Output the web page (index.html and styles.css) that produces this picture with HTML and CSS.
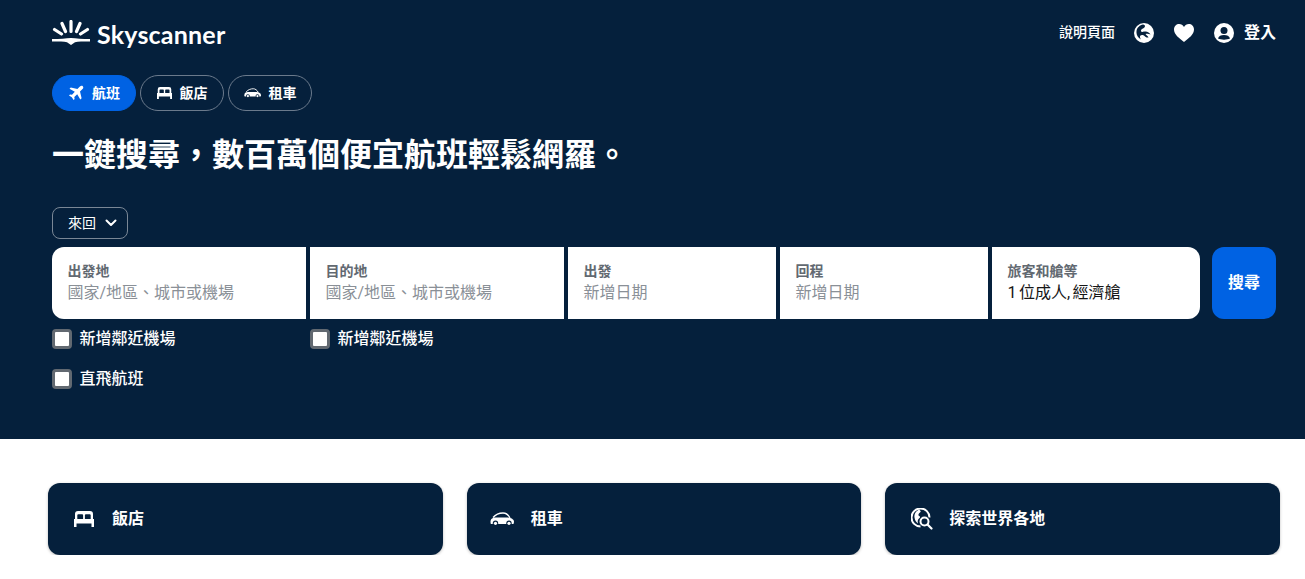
FILE: index.html
```html
<!DOCTYPE html>
<html lang="zh-Hant">
<head>
  <meta charset="UTF-8">
  <title>Skyscanner</title>
  <link rel="stylesheet" href="styles.css">
</head>
<body>

  <div class="hero">
    <div class="topbar">
      <div class="logo">
        <svg class="logo-sun" viewBox="0 0 38 26" width="38" height="26">
          <path d="M2.500 9.500l7 4.500M10 3.500l3.500 8M19 1.500v10M28 3.500l-3.500 8M35.500 9.500l-7 4.500" stroke="#fff" stroke-width="3.200" stroke-linecap="round" fill="none"/>
          <path d="M0 19C8 19 14 18.500 19 18 24 18.500 30 19 38 19V21.500C31 21.500 26 21.500 23 22.200L19 25 15 22.200C12 21.500 7 21.500 0 21.500z" fill="#fff"/>
        </svg>
        <span class="logo-text">Skyscanner</span>
      </div>
      <div class="top-links">
        <span class="help">說明頁面</span>
        <svg class="top-icon" viewBox="0 0 20 20" width="20" height="20">
          <circle cx="10" cy="10" r="10" fill="#fff"/>
          <path d="M9 1.500c-3 .5-6 3-6.500 6.500-.3 2.500.5 5 2.500 7l2 1.500c-1-1.500-1.500-3-.5-4 1-1 3-.5 4 .5.800.8 2 2 4 1.500-.5-1.500-2-2-3-3.500 1-.5 3.500-.5 5 .5-.5-1.500-3-3-5-3-2 0-3 1-4.500 0C6.500 7.500 7.500 6 9 5.500c1-.4 2-1.500 2-2.500 0-.5-.5-1.200-2-1.500z" fill="#05203c"/>
        </svg>
        <svg class="top-icon" viewBox="0 0 20 20" width="20" height="20">
          <path d="M10 19C5 15 0 11.500 0 6.500 0 3 2.500 1 5.200 1 7.200 1 9 2 10 4c1-2 2.800-3 4.800-3C17.500 1 20 3 20 6.500c0 5-5 8.500-10 12.500z" fill="#fff"/>
        </svg>
        <div class="login">
          <svg viewBox="0 0 20 20" width="20" height="20">
            <circle cx="10" cy="10" r="10" fill="#fff"/>
            <circle cx="10" cy="7.500" r="3.500" fill="#05203c"/>
            <path d="M4 15.500c.5-2.500 3-3.500 6-3.500s5.500 1 6 3.500c-3 1.500-9 1.500-12 0z" fill="#05203c"/>
          </svg>
          <span>登入</span>
        </div>
      </div>
    </div>

    <div class="tabs">
      <div class="tab active">
        <svg viewBox="0 0 16 16" width="16" height="16">
          <path d="M14.800 1.200c-.8-.8-2-.6-2.900.3L9.400 4 2.800 2.400 1.500 3.700l5.300 3.100-2.800 2.900-2-.3-1 1 2.800 1.800 1.800 2.800 1-1-.3-2 2.900-2.800 3.100 5.300 1.300-1.300L12 6.600l2.500-2.500c.9-.9 1.100-2.100.3-2.900z" fill="#fff"/>
        </svg>
        <span>航班</span>
      </div>
      <div class="tab">
        <svg viewBox="0 0 20 16" width="15" height="12">
          <path fill-rule="evenodd" d="M4 0h12a3 3 0 0 1 3 3v5h1v8h-2.500v-3.500h-15V16H0V8h1V3a3 3 0 0 1 3-3zM3.300 8h5.800V4.300a1 1 0 0 0-1-1H4.300a1 1 0 0 0-1 1zM10.900 8h5.800V4.300a1 1 0 0 0-1-1h-3.800a1 1 0 0 0-1 1z" fill="#fff"/>
        </svg>
        <span>飯店</span>
      </div>
      <div class="tab">
        <svg viewBox="0 0 24 14" width="17" height="10">
          <path d="M.5 10C.5 7 2 5.500 6 5.500H18C21 6 24 7 24 10L23.500 12H.8z" fill="#fff"/>
          <path d="M3 5.500C6 2 10 1 13 1 16 1 18.500 3 20 6" stroke="#fff" stroke-width="1.300" fill="none"/>
          <circle cx="5.500" cy="11.300" r="2.700" fill="#05203c"/><circle cx="5.500" cy="11.300" r="1.600" fill="#fff"/>
          <circle cx="19" cy="11.300" r="2.700" fill="#05203c"/><circle cx="19" cy="11.300" r="1.600" fill="#fff"/>
        </svg>
        <span>租車</span>
      </div>
    </div>

    <h1 class="headline">一鍵搜尋，數百萬個便宜航班輕鬆網羅。</h1>

    <div class="trip-type">
      <span>來回</span>
      <svg viewBox="0 0 12 8" width="12" height="8">
        <path d="M1.500 1.500L6 6l4.500-4.500" stroke="#fff" stroke-width="2" stroke-linecap="round" stroke-linejoin="round" fill="none"/>
      </svg>
    </div>

    <div class="search-row">
      <div class="field field-wide first">
        <div class="field-label">出發地</div>
        <div class="field-value">國家/地區、城市或機場</div>
      </div>
      <div class="field field-wide">
        <div class="field-label">目的地</div>
        <div class="field-value">國家/地區、城市或機場</div>
      </div>
      <div class="field">
        <div class="field-label">出發</div>
        <div class="field-value">新增日期</div>
      </div>
      <div class="field">
        <div class="field-label">回程</div>
        <div class="field-value">新增日期</div>
      </div>
      <div class="field last">
        <div class="field-label">旅客和艙等</div>
        <div class="field-value filled">1 位成人, 經濟艙</div>
      </div>
      <div class="search-btn"><span>搜尋</span></div>
    </div>

    <div class="nearby-row">
      <label class="check nearby-col"><span class="box"></span><span>新增鄰近機場</span></label>
      <label class="check"><span class="box"></span><span>新增鄰近機場</span></label>
    </div>
    <label class="check direct"><span class="box"></span><span>直飛航班</span></label>
  </div>

  <div class="cards">
    <div class="card">
      <svg class="card-icon" viewBox="0 0 20 16" width="20" height="16">
        <path fill-rule="evenodd" d="M4 0h12a3 3 0 0 1 3 3v5h1v8h-2.500v-3.500h-15V16H0V8h1V3a3 3 0 0 1 3-3zM3.300 8h5.800V4.300a1 1 0 0 0-1-1H4.300a1 1 0 0 0-1 1zM10.900 8h5.800V4.300a1 1 0 0 0-1-1h-3.800a1 1 0 0 0-1 1z" fill="#fff"/>
      </svg>
      <span>飯店</span>
    </div>
    <div class="card">
      <svg class="card-icon car" viewBox="0 0 24 14" width="24" height="14">
        <path d="M.5 10C.5 7 2 5.500 6 5.500H18C21 6 24 7 24 10L23.500 12H.8z" fill="#fff"/>
        <path d="M3 5.500C6 2 10 1 13 1 16 1 18.500 3 20 6" stroke="#fff" stroke-width="1.300" fill="none"/>
        <circle cx="5.500" cy="11.300" r="2.700" fill="#05203c"/><circle cx="5.500" cy="11.300" r="1.600" fill="#fff"/>
        <circle cx="19" cy="11.300" r="2.700" fill="#05203c"/><circle cx="19" cy="11.300" r="1.600" fill="#fff"/>
      </svg>
      <span>租車</span>
    </div>
    <div class="card">
      <svg class="card-icon globe" viewBox="0 0 22 22" width="22" height="22">
        <path d="M9.500 18.500a9 9 0 1 1 9-9" stroke="#fff" stroke-width="2" fill="none"/>
        <path d="M8 1.500C5 3 3 6 3.500 9.500c.3 2.500 1.500 4.500 3.500 6-.5-2-.5-4 1-5 1.500-1 1.500-2-.5-3-.5-1.500 1-2.500 2-3.500 .5-.5 0-1.500-1.500-2.500z" fill="#fff"/>
        <circle cx="13.500" cy="13.500" r="4" stroke="#fff" stroke-width="2" fill="none"/>
        <path d="M16.500 16.500L20.500 20.500" stroke="#fff" stroke-width="2.200" stroke-linecap="round"/>
      </svg>
      <span>探索世界各地</span>
    </div>
  </div>

</body>
</html>
```

FILE: styles.css
```css
* { box-sizing: border-box; }
html, body {
  margin: 0; padding: 0;
  font-family: Roboto, 'Noto Sans CJK TC', sans-serif;
  background-color: #fff; color: #fff;
}
svg { display: block; flex: none; }

.hero { height: 439px; padding: 16px 29px 0 52px; background-color: #05203c; }

.topbar { display: flex; justify-content: space-between; align-items: center; height: 36px; }
.logo { display: flex; align-items: center; gap: 7px; }
.logo-sun { margin-bottom: 2px; }
.logo-text { font-family: Lato, sans-serif; font-size: 25px; font-weight: 700; letter-spacing: 0.2px; line-height: 36px; }
.top-links { display: flex; align-items: center; padding-bottom: 2px; }
.help { font-size: 14px; font-weight: 500; margin-right: 19px; padding-bottom: 4px; }
.top-icon { margin-right: 20px; }
.login { display: flex; align-items: center; gap: 10px; font-size: 16px; font-weight: 700; }
.login span { padding-bottom: 4px; }

.tabs { display: flex; gap: 4px; margin-top: 23px; }
.tab {
  display: flex; align-items: center; justify-content: center; gap: 8px;
  width: 84px; height: 36px; border: 1px solid #6b7a8c; border-radius: 18px;
  font-size: 14px; font-weight: 700;
}
.tab span { padding-bottom: 3px; }
.tab.active { background-color: #0062e3; border-color: #0062e3; }

.headline { margin: 22px 0 0; font-size: 32px; line-height: 44px; font-weight: 700; }

.trip-type {
  display: flex; align-items: center; justify-content: space-between;
  width: 76px; height: 32px; margin-top: 30px; padding: 0 10px 0 15px;
  border: 1px solid #7a8796; border-radius: 8px; font-size: 14px;
}
.trip-type span { padding-bottom: 2px; }

.search-row { display: flex; gap: 4px; margin-top: 8px; }
.field { width: 208px; height: 72px; padding: 14px 15.5px 0; background-color: #fff; }
.field-wide { width: 254px; }
.field.first { border-radius: 12px 0 0 12px; }
.field.last { border-radius: 0 12px 12px 0; }
.field-label { font-size: 14px; line-height: 20px; font-weight: 700; color: #626971; }
.field-value { font-size: 16px; line-height: 24px; color: #8a9097; }
.field-value.filled { color: #161616; word-spacing: -1.5px; }
.search-btn {
  display: flex; align-items: center; justify-content: center;
  width: 64px; height: 72px; margin-left: 8px;
  background-color: #0062e3; border-radius: 12px; font-size: 16px; font-weight: 700;
}
.search-btn span { padding-bottom: 4px; }

.nearby-row { display: flex; margin-top: 8px; }
.nearby-col { width: 258px; }
.check { display: flex; align-items: center; gap: 7.5px; height: 24px; font-size: 16px; font-weight: 500; }
.check span:last-child { padding-bottom: 4px; }
.box { width: 20px; height: 20px; background-color: #fff; border: 3px solid #626971; border-radius: 4px; }
.direct { margin-top: 16px; }

.cards { display: flex; gap: 24px; padding: 44px 25px 0 48px; }
.card {
  display: flex; align-items: center; flex: 1;
  height: 72px; padding-left: 26px; background-color: #05203c; border-radius: 12px;
  box-shadow: 0 1px 3px rgba(37, 32, 31, 0.3);
  font-size: 16px; font-weight: 700;
}
.card span { padding-bottom: 4px; }
.card-icon { margin-right: 18px; }
.card-icon.car { margin-left: -3px; margin-right: 17px; }
.card-icon.globe { margin-right: 16px; }
```
